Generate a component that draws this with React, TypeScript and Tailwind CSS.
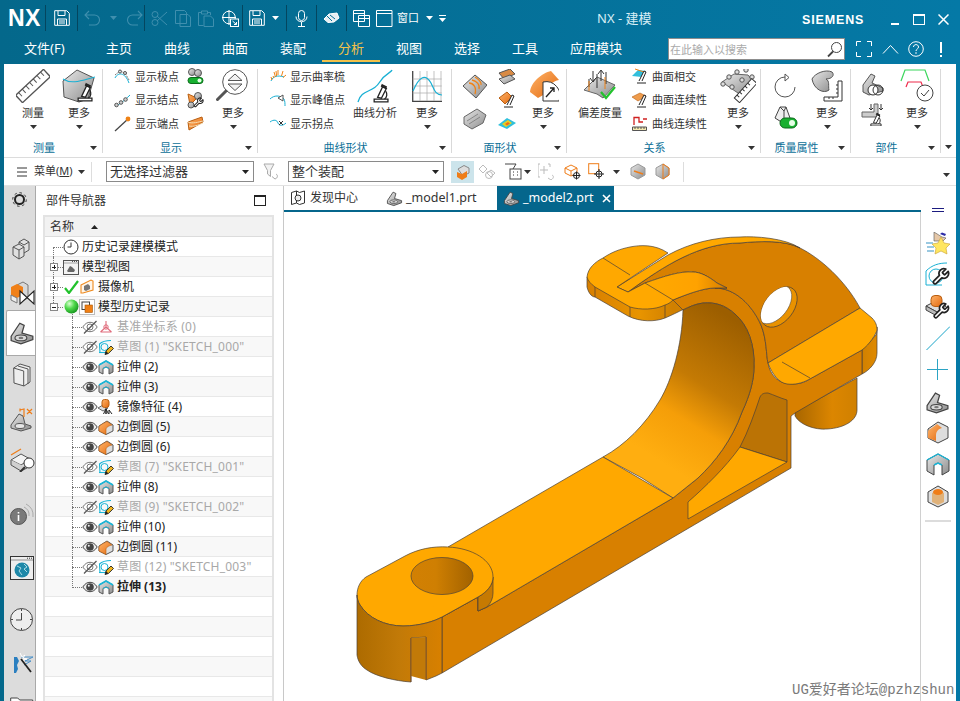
import React from 'react';

const font = "font-['Noto_Sans','Noto_Sans_CJK_SC',sans-serif]";

const Ico: React.FC<{ w?: number; h?: number; vb?: string; className?: string; children: React.ReactNode }> = ({ w = 16, h = 16, vb, className = '', children }) => (
  <svg width={w} height={h} viewBox={vb || `0 0 ${w} ${h}`} className={`block shrink-0 ${className}`} fill="none">
    {children}
  </svg>
);

const Caret: React.FC<{ c?: string; w?: number }> = ({ c = '#333', w = 7 }) => (
  <svg width={w} height={4} viewBox="0 0 7 4" className="block shrink-0"><path d="M0 0h7L3.5 4z" fill={c} /></svg>
);

const wrenchPath = 'M14.7 6.3a1 1 0 0 0 0 1.4l1.6 1.6a1 1 0 0 0 1.4 0l3.77-3.77a6 6 0 0 1-7.94 7.94l-6.91 6.91a2.12 2.12 0 0 1-3-3l6.91-6.91a6 6 0 0 1 7.94-7.94l-3.76 3.76z';

const Micro: React.FC<{ x: number; y: number; s?: number }> = ({ x, y, s = 1 }) => (
  <g transform={`translate(${x} ${y}) scale(${s})`} stroke="#222" strokeWidth={1.1} fill="#fff">
    <path d="M1 14h12v2.5H1z" />
    <path d="M4 12.5 8.5 3l3.2 1.6-4.4 8.6z" />
    <path d="M8 1.5l3.5 1.8-.7 1.3-3.4-1.8z" fill="#333" />
    <path d="M11 7a5 5 0 0 1-1 7" fill="none" />
  </g>
);

const Wrench: React.FC<{ x: number; y: number; s?: number }> = ({ x, y, s = 1 }) => (
  <g transform={`translate(${x} ${y}) scale(${s})`}><path d={wrenchPath} fill="#fff" stroke="#222" strokeWidth={2.2} strokeLinejoin="round" /></g>
);

const Pencil: React.FC<{ x: number; y: number }> = ({ x, y }) => (
  <g transform={`translate(${x} ${y})`}>
    <path d="M0 9 1 5.6 6 .5 8.500 3 3.400 8z" fill="#f1b51c" stroke="#222" strokeWidth={0.9} />
    <path d="M0 9 1 5.6 3.400 8z" fill="#222" />
  </g>
);

const Part: React.FC<{ s?: number; c?: string }> = ({ s = 24 }) => (
  <Ico w={s} h={s} vb="0 0 24 24">
    <path d="M2 15 10 3l4 2-2 7 10 3v3l-11 4-9-3z" fill="url(#gGray)" stroke="#444" strokeWidth={1.2} />
    <ellipse cx="11" cy="16.500" rx="5.500" ry="2.600" fill="#d9d9d9" stroke="#444" />
    <ellipse cx="11" cy="16.500" rx="2.200" ry="1.100" fill="#777" />
  </Ico>
);

const Eye: React.FC<{ off?: boolean }> = ({ off }) => (
  <Ico w={16} h={14}>
    <path d="M.8 7C3 3.500 5.500 2.300 8 2.300S13 3.500 15.200 7C13 10.500 10.500 11.700 8 11.700S3 10.500.8 7z" fill={off ? '#fff' : '#eee'} stroke={off ? '#777' : '#444'} />
    <circle cx="8" cy="7" r={off ? 3 : 3.800} fill={off ? 'none' : '#444'} stroke={off ? '#777' : 'none'} />
    {!off && <circle cx="6.800" cy="5.800" r="1" fill="#eee" />}
    {off && <path d="M14.500 1 2 13.500" stroke="#555" strokeWidth={1.2} />}
  </Ico>
);

const Extrude = () => (
  <Ico w={16} h={16}>
    <path d="M1 6 8 2l7 4v7l-4 2V9.500L8 8 5 9.500V15l-4-2z" fill="url(#gGray)" stroke="#555" />
    <path d="M1 6 8 2l7 4" stroke="#19b6d8" strokeWidth={1.6} />
    <path d="M5 9.500 8 8l3 1.500" stroke="#19b6d8" strokeWidth={1} />
  </Ico>
);

const Blend = () => (
  <Ico w={16} h={16}>
    <path d="M1 7 9 2l6 4v6l-7 3.500L1 12z" fill="#ddd" stroke="#555" />
    <path d="M1 12V8.500C1 6.500 4 5 9 2.500l5 3.500c-4 1-6 2.500-6 4.500v5z" fill="url(#gOrange)" stroke="#b85e10" strokeWidth={0.6} />
  </Ico>
);

const Sketch = () => (
  <Ico w={16} h={16}>
    <path d="M2 14 1.500 5C4 2.500 8 1.500 13 1.500" stroke="#19b6d8" strokeWidth={1.1} />
    <path d="M1 13.500h8" stroke="#19b6d8" strokeWidth={1.1} />
    <circle cx="6.500" cy="8" r="3.500" stroke="#19b6d8" />
    <Pencil x={7} y={6.500} />
  </Ico>
);

const Mirror = () => (
  <Ico w={16} h={16}>
    <path d="M0 9l5-3 5 3-5 3z" fill="#ddd" stroke="#666" />
    <rect x="4" y="0.500" width="7" height="8" rx="2.500" fill="url(#gOrange)" stroke="#b85e10" />
    <path d="M5.500 15 8 10v5M10.500 15 8 10M8 9v6M11 15V11M14 15l-3-4" stroke="#222" />
  </Ico>
);

const Datum = () => (
  <Ico w={16} h={14}>
    <path d="M8 1v6L2.500 12M8 7l5.500 5M2.500 12h11" stroke="#e06c7c" strokeWidth={1.1} />
    <circle cx="8" cy="7" r="2.200" stroke="#e06c7c" />
  </Ico>
);

const ClockI: React.FC<{ s?: number }> = ({ s = 16 }) => (
  <Ico w={s} h={s} vb="0 0 16 16">
    <circle cx="8" cy="8" r="7" stroke="#333" fill="#fff" />
    <path d="M8 3.500V8H4.500" stroke="#333" />
  </Ico>
);

type RowT = { t: string; kind: 'top' | 'child'; exp?: '+' | '-'; lead?: React.ReactNode; ic?: React.ReactNode; off?: boolean; b?: boolean; dim?: boolean };

const rows: RowT[] = [
  { t: '历史记录建模模式', kind: 'top', ic: <ClockI /> },
  {
    t: '模型视图', kind: 'top', exp: '+',
    ic: (
      <Ico w={16} h={16}>
        <rect x=".5" y="1.500" width="15" height="14" fill="#f3f3f3" stroke="#555" />
        <path d="M.5 4h15M9 2.500h5" stroke="#555" strokeDasharray="1 1" />
        <path d="M4 12 7 7l2 1 3 3-1 2H5z" fill="#666" />
      </Ico>
    ),
  },
  {
    t: '摄像机', kind: 'top', exp: '+',
    lead: <Ico w={15} h={14}><path d="M1 8l4 5L14 1" stroke="#22c22c" strokeWidth={2.200} /></Ico>,
    ic: (
      <Ico w={14} h={15}>
        <path d="M1 6l10-5 2 1v9L3 14H1z" fill="#fff5e8" stroke="#ee8a1e" strokeWidth={1.100} />
        <path d="M4 11V7l4-2 2 2v3l-4 2z" fill="#777" />
      </Ico>
    ),
  },
  {
    t: '模型历史记录', kind: 'top', exp: '-',
    lead: <Ico w={15} h={15}><circle cx="7.500" cy="7.500" r="7" fill="url(#gBall)" /></Ico>,
    ic: (
      <Ico w={16} h={16}>
        <rect x=".5" y=".5" width="15" height="15" fill="#fff" stroke="#bbb" />
        <rect x="3" y="3" width="7.500" height="7.500" fill="#fff" stroke="#444" />
        <rect x="6" y="6" width="7.500" height="7.500" fill="#f07f14" stroke="#a45608" strokeWidth={0.6} />
      </Ico>
    ),
  },
  { t: '基准坐标系 (0)', kind: 'child', off: true, dim: true, ic: <Datum /> },
  { t: '草图 (1) "SKETCH_000"', kind: 'child', off: true, dim: true, ic: <Sketch /> },
  { t: '拉伸 (2)', kind: 'child', ic: <Extrude /> },
  { t: '拉伸 (3)', kind: 'child', ic: <Extrude /> },
  { t: '镜像特征 (4)', kind: 'child', ic: <Mirror /> },
  { t: '边倒圆 (5)', kind: 'child', ic: <Blend /> },
  { t: '边倒圆 (6)', kind: 'child', ic: <Blend /> },
  { t: '草图 (7) "SKETCH_001"', kind: 'child', off: true, dim: true, ic: <Sketch /> },
  { t: '拉伸 (8)', kind: 'child', ic: <Extrude /> },
  { t: '草图 (9) "SKETCH_002"', kind: 'child', off: true, dim: true, ic: <Sketch /> },
  { t: '拉伸 (10)', kind: 'child', ic: <Extrude /> },
  { t: '边倒圆 (11)', kind: 'child', ic: <Blend /> },
  { t: '草图 (12) "SKETCH_003"', kind: 'child', off: true, dim: true, ic: <Sketch /> },
  { t: '拉伸 (13)', kind: 'child', b: true, ic: <Extrude /> },
];

const Defs = () => (
  <svg className="absolute w-0 h-0">
    <defs>
      <linearGradient id="gGray" x1="0" y1="0" x2="1" y2="1"><stop offset="0" stopColor="#e8e8e8" /><stop offset="1" stopColor="#8c8c8c" /></linearGradient>
      <linearGradient id="gOrange" x1="0" y1="0" x2="1" y2="1"><stop offset="0" stopColor="#ffb46a" /><stop offset="1" stopColor="#e2690f" /></linearGradient>
      <radialGradient id="gBall" cx=".35" cy=".3" r=".8"><stop offset="0" stopColor="#d8ffd0" /><stop offset=".45" stopColor="#4ed84a" /><stop offset="1" stopColor="#0d8a16" /></radialGradient>
      <linearGradient id="mEnd" x1="357" y1="0" x2="442" y2="0" gradientUnits="userSpaceOnUse"><stop offset="0" stopColor="#ad6b00" /><stop offset=".5" stopColor="#c27a08" /><stop offset="1" stopColor="#d88000" /></linearGradient>
      <linearGradient id="mHole" x1="411" y1="0" x2="473" y2="0" gradientUnits="userSpaceOnUse"><stop offset="0" stopColor="#d28003" /><stop offset=".4" stopColor="#cf7f02" /><stop offset="1" stopColor="#a26200" /></linearGradient>
      <linearGradient id="mInner" x1="650" y1="455" x2="735" y2="320" gradientUnits="userSpaceOnUse"><stop offset="0" stopColor="#ffae10" /><stop offset=".3" stopColor="#f59e08" /><stop offset=".55" stopColor="#c47a04" /><stop offset="1" stopColor="#9c5e00" /></linearGradient>
      <linearGradient id="mCyl" x1="795" y1="0" x2="857" y2="0" gradientUnits="userSpaceOnUse"><stop offset="0" stopColor="#a86600" /><stop offset=".6" stopColor="#dc8600" /><stop offset="1" stopColor="#d08000" /></linearGradient>
      <linearGradient id="mTab" x1="590" y1="0" x2="673" y2="0" gradientUnits="userSpaceOnUse"><stop offset="0" stopColor="#d88000" /><stop offset=".6" stopColor="#e89400" /><stop offset="1" stopColor="#d08000" /></linearGradient>
      <linearGradient id="mTabTop" x1="655" y1="0" x2="725" y2="0" gradientUnits="userSpaceOnUse"><stop offset="0" stopColor="#ffa800" /><stop offset=".6" stopColor="#ffa200" /><stop offset="1" stopColor="#d88000" /></linearGradient>
      <linearGradient id="mPad" x1="862" y1="0" x2="877" y2="0" gradientUnits="userSpaceOnUse"><stop offset="0" stopColor="#d08000" /><stop offset="1" stopColor="#e08a00" /></linearGradient>
    </defs>
  </svg>
);

const Sep = () => <div className="w-px h-[26px] bg-[#04465f] shrink-0" />;

const TitleBar = () => {
  const w = '#fff';
  const d = '#3f8fae';
  return (
    <div className="h-[36px] flex items-center shrink-0 text-white relative">
      <div className="w-[45px] pl-[8px] text-[23px] font-bold leading-none font-['Liberation_Sans',sans-serif] tracking-[0.5px]">NX</div>
      <Sep />
      <div className="w-[31px] flex justify-center">
        <Ico w={16} h={16}><path d="M.7.7h12l2.600 2.600v12H.7z M4 1v4.500h7V1M3.500 15V9h9v6M5 11h6M5 13h6" stroke={w} /></Ico>
      </div>
      <Sep />
      <div className="w-[66px] pl-[6px] flex items-center">
        <Ico w={17} h={17}><path d="M5 1 1 5l4 4M1 5h9.500a5 5 0 0 1 0 10H5" stroke={d} strokeWidth={1.100} /></Ico>
        <div className="ml-[9px] mr-[9px]"><Caret c={d} /></div>
        <Ico w={17} h={17}><path d="M12 1l4 4-4 4M16 5H6.500a5 5 0 0 0 0 10H12" stroke={d} strokeWidth={1.100} /></Ico>
      </div>
      <Sep />
      <div className="w-[97px] pl-[6px] flex items-center gap-[7px]">
        <Ico w={17} h={17}><circle cx="4" cy="12.500" r="3" stroke={d} /><circle cx="4" cy="4.500" r="3" stroke={d} /><path d="M6 11 16 2M6 6l10 9" stroke={d} /></Ico>
        <Ico w={16} h={17}><path d="M.5.5h9l2 2v11H.5zM5 4.500h8l2.500 2.500v9.500H5z" stroke={d} /></Ico>
        <Ico w={16} h={17}><path d="M3 2.500H.5v13h5M10 2.500h2.500V5M3.500 1h6v3h-6zM6 6h6.500l3 3v7.500H6z" stroke={d} /></Ico>
        <Ico w={17} h={17} className="ml-[1px]"><circle cx="7" cy="7.500" r="6.300" stroke={w} /><path d="M7 0v15M0 7.500h14" stroke={w} /><rect x="8.500" y="9" width="8" height="7.500" fill="#056f96" stroke={w} /><path d="M10.500 11l4 3.500M14.500 12v2.500H12" stroke={w} /></Ico>
      </div>
      <Sep />
      <div className="w-[43px] pl-[6px] flex items-center gap-[7px]">
        <Ico w={16} h={16}><path d="M.7.7h12l2.600 2.600v12H.7z M4 1v4.500h7V1M3.500 15V9h9v6M5 11h6M5 13h6" stroke={w} /></Ico>
        <Caret c={w} />
      </div>
      <Sep />
      <div className="w-[29px] flex justify-center">
        <Ico w={13} h={17}><rect x="3.500" y=".5" width="6" height="10" rx="3" stroke={w} /><path d="M1 6.500c0 7 11 7 11 0M6.500 12v4M3 16.500h7" stroke={w} /></Ico>
      </div>
      <Sep />
      <div className="w-[29px] flex justify-center">
        <Ico w={17} h={12}><path d="M1 7l5-5 8-1 2 5-5 4-6 .5z" fill="#e8eef2" stroke={w} /><path d="M4 4l5 5M7 3l5 4" stroke="#056f96" /></Ico>
      </div>
      <Sep />
      <div className="pl-[6px] flex items-center">
        <Ico w={17} h={17}><path d="M.5.5h11v11H.5zM.5 3.500h11M5.500 5.500h11v11h-11zM5.500 8.500h11" stroke={w} /></Ico>
        <Ico w={17} h={17} className="ml-[6px]"><path d="M.5.5h15.500v16H.5zM.5 3.500h15.500" stroke={w} /></Ico>
        <span className="ml-[4px] text-[11px]">窗口</span>
        <div className="ml-[7px]"><Caret c={w} /></div>
        <div className="ml-[6px] flex flex-col gap-[2px]"><div className="w-[7px] h-px bg-white" /><Caret c={w} /></div>
      </div>
      <div className="absolute left-[597px] top-[9px] text-[13px] leading-[18px] text-[#d8eef6]">NX - 建模</div>
      <div className="absolute left-[802px] top-[11px] text-[12.5px] leading-[18px] font-bold font-['Liberation_Sans',sans-serif] tracking-[0.85px] text-white">SIEMENS</div>
      <div className="absolute left-[891px] top-[14px] flex items-start">
        <div className="w-[8px] h-[2px] bg-white mt-[9px]" />
        <div className="w-[12px] h-[11px] border border-white border-t-2 ml-[14px]" />
        <Ico w={11} h={11} className="ml-[13px]"><path d="M.5.5l10 10M10.500.5l-10 10" stroke={w} strokeWidth={1.500} /></Ico>
      </div>
    </div>
  );
};

const MenuTabs = () => {
  const tabs = ['主页', '曲线', '曲面', '装配', '分析', '视图', '选择', '工具'];
  return (
    <div className="h-[28px] flex items-start shrink-0 text-white text-[13px] leading-[24px] relative">
      <div className="w-[90px] pl-[24px]">文件(F)</div>
      {tabs.map(t => (
        <div key={t} className={`w-[58px] h-[26px] text-center ${t === '分析' ? 'text-[#f2c14a] border-b-2 border-[#f2c14a]' : ''}`}>{t}</div>
      ))}
      <div className="ml-[16px]">应用模块</div>
      <div className="absolute left-[668px] top-[2px] w-[177px] h-[22px] bg-white border border-[#8d8d8d] flex items-center justify-between pl-[1px] pr-[1px]">
        <span className="text-[11px] leading-none text-[#aaa]">在此输入以搜索</span>
        <Ico w={17} h={17}><circle cx="10.500" cy="6.500" r="5" stroke="#444" fill="#fff" /><path d="M7 10.500 2 15.500" stroke="#444" strokeWidth={1.800} /></Ico>
      </div>
      <div className="absolute left-[856px] top-[5px] flex items-center">
        <Ico w={16} h={16}><path d="M.5 5V.5H5M11 .5h4.500V5M15.500 11v4.500H11M5 15.500H.5V11" stroke="#fff" /></Ico>
        <Ico w={17} h={10} className="ml-[10px]"><path d="M1 9.500l7.500-8 7.500 8" stroke="#fff" /></Ico>
        <Ico w={16} h={16} className="ml-[9px]"><circle cx="8" cy="8" r="7.300" stroke="#fff" /><path d="M5.500 6c0-3.200 5-3.200 5 0 0 2-2.500 2-2.500 4" stroke="#fff" /><circle cx="8" cy="12" r=".8" fill="#fff" /></Ico>
        <div className="ml-[16px] flex flex-col items-center gap-[2px]"><div className="w-[2px] h-[11px] bg-white" /><div className="w-[2px] h-[2px] bg-white" /></div>
      </div>
    </div>
  );
};

const Large: React.FC<{ label: string; w?: number; children: React.ReactNode; noCaret?: boolean }> = ({ label, w = 46, children, noCaret }) => (
  <div className="flex flex-col items-center shrink-0" style={{ width: w }}>
    <div className="h-[34px] flex items-center justify-center">{children}</div>
    <div className="mt-[2px] h-[15px] text-[11px] leading-[15px] text-[#333] whitespace-nowrap">{label}</div>
    {!noCaret && <div className="mt-[5px]"><Caret c="#333" /></div>}
  </div>
);

const Small: React.FC<{ label?: string; children: React.ReactNode }> = ({ label, children }) => (
  <div className="h-[23.5px] flex items-center gap-[4px] text-[11px] text-[#333] whitespace-nowrap">
    {children}
    {label && <span>{label}</span>}
  </div>
);

const Group: React.FC<{ w: number; label?: string; className?: string; children?: React.ReactNode }> = ({ w, label, className = '', children }) => (
  <div className="shrink-0 h-[84px] border-r border-[#d9d9d9] flex flex-col" style={{ width: w }}>
    <div className={`h-[72px] flex items-start ${className}`}>{children}</div>
    <div className="h-[12px] flex items-center">
      <div className="flex-1 text-center text-[11px] leading-[14px] text-[#0b6f97] pt-[2px]">{label}</div>
      <div className="w-[18px] flex justify-center pt-[2px]"><Caret c="#333" /></div>
    </div>
  </div>
);

const Ribbon = () => (
  <div className="h-[94px] shrink-0 border-b border-[#dcdcdc] pt-[5px] flex relative">
    <Group w={99} label="测量" className="pl-[6px]">
      <Large label="测量">
        <Ico w={34} h={34}><g transform="rotate(-43 17 17)"><rect x="-2" y="12" width="38" height="10" fill="#fff" stroke="#555" strokeWidth={1.400} />{[2, 7, 12, 17, 22, 27, 32].map(x => <path key={x} d={`M${x} 12v5`} stroke="#555" />)}</g></Ico>
      </Large>
      <Large label="更多">
        <Ico w={34} h={34}>
          <path d="M1 12 15 1l17 8-6 21-9 3-15-5z" fill="url(#gGray)" stroke="#555" />
          <path d="M1 10c9 6 20 1 32-2" stroke="#19b0d4" strokeWidth={1.100} />
          <Micro x={15} y={13} s={1.150} />
        </Ico>
      </Large>
    </Group>
    <Group w={155} label="显示" className="pl-[11px]">
      <div className="w-[73px] -mt-[4px]">
        <Small label="显示极点"><Ico w={17} h={15}><path d="M1 9c3-6 10-6 14 5" stroke="#19b0d4" /><path d="M1 6 6 2l5 2 4 7" stroke="#777" strokeDasharray="2 1" /><circle cx="6" cy="2.500" r="1.500" fill="#ddd" stroke="#555" /><circle cx="11" cy="4" r="1.500" fill="#ddd" stroke="#555" /></Ico></Small>
        <Small label="显示结点"><Ico w={17} h={15}><path d="M1 13c4-1 9-5 15-11" stroke="#19b0d4" /><circle cx="2.500" cy="12" r="1.800" fill="#ccc" stroke="#555" /><circle cx="7" cy="9.500" r="1.800" fill="#ccc" stroke="#555" /><circle cx="11.500" cy="6.500" r="1.800" fill="#ccc" stroke="#555" /></Ico></Small>
        <Small label="显示端点"><Ico w={17} h={16}><path d="M1 15 14 3" stroke="#444" strokeWidth={1.200} /><circle cx="14" cy="3" r="2.400" fill="#ef8216" /></Ico></Small>
      </div>
      <div className="-mt-[4px] flex flex-col items-start">
        <Small><Ico w={17} h={17}><circle cx="5" cy="4" r="3.500" fill="url(#gGray)" stroke="#555" /><circle cx="11" cy="5" r="3.500" fill="url(#gGray)" stroke="#555" /><rect x="1" y="9.500" width="15" height="6" rx="3" fill="#18b030" stroke="#0b6a1a" /><circle cx="12.500" cy="12.500" r="2" fill="#e6ffe6" /></Ico></Small>
        <Small><Ico w={17} h={17}><path d="M1 2l9 4-7 7z" fill="url(#gOrange)" stroke="#b85e10" /><circle cx="11" cy="4" r="3.500" fill="url(#gGray)" stroke="#555" /><circle cx="4" cy="13" r="3" fill="url(#gGray)" stroke="#555" /><Wrench x={6} y={5} s={0.46} /></Ico></Small>
        <Small><Ico w={17} h={15}><path d="M1 6l14-5 1 5-14 8z" fill="url(#gOrange)" stroke="#b85e10" /><path d="M1 6c5 2 10 0 15-1M2 10c5 1 9-1 14-3" stroke="#f5dcb0" /></Ico></Small>
      </div>
      <div className="ml-[6px]">
        <Large label="更多" w={46}>
          <Ico w={34} h={34}>
            <circle cx="19" cy="13" r="12.300" fill="#fff" stroke="#555" />
            <path d="M12 11.500 19 5l7 6.500zM12 15l7 6.500 7-6.500z" stroke="#555" fill="#f2f2f2" />
            <path d="M10 22 1.500 30.500" stroke="#555" strokeWidth={3} strokeLinecap="round" />
          </Ico>
        </Large>
      </div>
    </Group>
    <Group w={194} label="曲线形状" className="pl-[12px]">
      <div className="w-[79px] -mt-[4px]">
        <Small label="显示曲率梳"><Ico w={16} h={15}><path d="M1 12C3 7 8 6 14 8" stroke="#19b0d4" /><path d="M1 8l1 3M4 3l1.500 5M8 1l0 5M13 2l-1.500 5M16 6l-3 2.500M3 7l1 2M6 2l.6 5" stroke="#ef8216" /></Ico></Small>
        <Small label="显示峰值点"><Ico w={16} h={14}><path d="M0 6c4-4 10-4 14 0 1 2 1 5 1 7" stroke="#19b0d4" /><path d="M8 5l5-3v6z" fill="#fff" stroke="#555" /></Ico></Small>
        <Small label="显示拐点"><Ico w={16} h={9}><path d="M0 3c4-3 7-2 8 1s5 3 8 0" stroke="#19b0d4" /><path d="M9 2l4 4M13 2 9 6" stroke="#333" /></Ico></Small>
      </div>
      <div className="ml-[4px]">
        <Large label="曲线分析" w={52} noCaret>
          <Ico w={36} h={34}>
            <path d="M1 33C4 20 16 24 22 14S34 4 35 1" stroke="#19b0d4" strokeWidth={1.300} />
            <Micro x={16} y={14} s={1.150} />
          </Ico>
        </Large>
      </div>
      <div className="ml-[0px]">
        <Large label="更多" w={52}>
          <Ico w={30} h={31}>
            <path d="M.7 0v30.300H30" stroke="#444" strokeWidth={1.300} />
            <path d="M.7 8h29M.7 15h29M.7 22h29M8 0v30M15 0v30M22 0v30M29 0v30" stroke="#aaa" strokeWidth={0.7} />
            <path d="M1 20c6-14 12-18 18-8 3 6 4 12 11 12" stroke="#19b0d4" strokeWidth={1.200} />
          </Ico>
        </Large>
      </div>
    </Group>
    <Group w={115} label="面形状" className="pl-[11px]">
      <div className="flex flex-col gap-[9px] w-[32px] pt-[5px]">
        <Ico w={24} h={25}><path d="M0 12 12 1l12 10-11 13z" fill="url(#gGray)" stroke="#555" /><path d="M6 9c4 0 8 4 6 11M9 6c4 1 8 4 7 9M12 3c3 2 7 5 6 8" stroke="#ef8216" strokeWidth={1.300} /></Ico>
        <Ico w={24} h={22}><path d="M1 9 14 1l9 6-3 8-11 6-8-5z" fill="url(#gGray)" stroke="#666" /><path d="M4 13l11-7M6 16l11-7" stroke="#777" strokeWidth={0.8} /></Ico>
      </div>
      <div className="-mt-[4px] ml-[3px] w-[22px]">
        <Small><Ico w={18} h={16}><path d="M1 4l11-4 5 5L6 10z" fill="#d88a44" stroke="#555" /><path d="M1 10l11-4 5 4-11 5z" fill="url(#gGray)" stroke="#555" /></Ico></Small>
        <Small><Ico w={18} h={18}><path d="M1 7l8-6 5 5-7 7z" fill="url(#gOrange)" stroke="#b85e10" /><path d="M6 16h9M9 14 14 4l2 1-4 9" stroke="#222" fill="#fff" /></Ico></Small>
        <Small><Ico w={18} h={13}><path d="M0 8l9-7 9 5-9 6z" fill="#2fc0dc" /><path d="M4 7l6-4 4 3-6 4z" fill="#e8d020" /><path d="M7 7l3-2 2 1.500-3 2z" fill="#ef6a1c" /></Ico></Small>
      </div>
      <div className="ml-[3px]">
        <Large label="更多" w={40}>
          <Ico w={32} h={32}>
            <path d="M3 22C4 12 15 3 24 1l8 9c-6 1-12 6-14 14l-7 4z" fill="url(#gOrange)" />
            <path d="M16 12a14 14 0 0 1 16 19H16z" fill="#fff" stroke="#333" />
            <path d="M19 27 27 18M23 18h4v4" stroke="#222" strokeWidth={1.300} />
          </Ico>
        </Large>
      </div>
    </Group>
    <Group w={194} label="关系" className="pl-[9px]">
      <Large label="偏差度量" w={48} noCaret>
        <Ico w={34} h={34}>
          <path d="M1 21 14 8l18 8-12 13-6-4z" fill="url(#gGray)" stroke="#666" />
          <path d="M10 2v11M7 9l3 4 3-4M18 2v10M15 5l3-4 3 4M6 10v8M14 5v14M23 3v12" stroke="#333" />
          <path d="M6 12v10M22 8v12" stroke="#ef8216" />
          <path d="M18 23l5 6 9-11" stroke="#22c22c" strokeWidth={2.200} />
        </Ico>
      </Large>
      <div className="ml-[8px] w-[85px] -mt-[4px]">
        <Small label="曲面相交"><Ico w={16} h={17}><path d="M0 8 6 2l8 1-4 6z" fill="#33bfdc" /><path d="M3 1l9 3" stroke="#ef8216" /><path d="M5 15h9M7 13 12 3l2 1-4 9" stroke="#222" fill="#fff" /></Ico></Small>
        <Small label="曲面连续性"><Ico w={16} h={17}><path d="M0 5 8 1l6 3-8 5z" fill="#ef9c4c" stroke="#b85e10" strokeWidth={0.6} /><path d="M5 15h9M7 13 12 3l2 1-4 9" stroke="#222" fill="#fff" /></Ico></Small>
        <Small label="曲线连续性"><Ico w={16} h={15}><path d="M2 9V1.500h5V6h4M11 3h4" stroke="#d02020" strokeWidth={1.300} /><path d="M.5 11h14v3.500H.5z" fill="#f4e9b0" stroke="#555" /><path d="M3 11v2M6 11v2M9 11v2M12 11v2" stroke="#555" /></Ico></Small>
      </div>
      <div className="ml-[1px]">
        <Large label="更多" w={40}>
          <Ico w={36} h={34}>
            <path d="M2 13 14 5l14 1 5 6-12 14-6-4z" fill="url(#gGray)" stroke="#666" />
            {[[3, 15], [9, 8], [17, 3], [26, 1], [32, 8], [12, 18], [22, 11]].map(([x, y]) => <circle key={`${x}${y}`} cx={x} cy={y} r="2.200" fill="#ddd" stroke="#555" />)}
            <g transform="rotate(-48 26 22)"><rect x="13" y="18" width="26" height="7" fill="#fff" stroke="#333" /><path d="M17 18v3M21 18v3M25 18v3M29 18v3M33 18v3" stroke="#333" /></g>
          </Ico>
        </Large>
      </div>
    </Group>
    <Group w={90} label="质量属性" className="pl-[9px]">
      <div className="w-[29px] flex flex-col items-center gap-[4px] pt-[2px]">
        <Ico w={24} h={28} vb="0 0 24 28"><path d="M12 6a10 10 0 1 0 10 10" stroke="#555" /><path d="M12 3v7l4-3.500z" stroke="#555" fill="#fff" /></Ico>
        <Ico w={26} h={26}><path d="M3 15 8 4h6l4 11-7 5z" fill="#eee" stroke="#444" /><path d="M8 4l4 4 2-4M12 8v12" stroke="#444" /><rect x="8" y="15" width="17" height="10" rx="5" fill="#18b030" stroke="#0b6a1a" /><circle cx="20" cy="20" r="3" fill="#e6ffe6" /></Ico>
      </div>
      <div className="ml-[5px]">
        <Large label="更多" w={46}>
          <Ico w={32} h={32}>
            <path d="M1 9c3-6 14-10 20-7 3 3 0 7-6 7 4 2 2 7 3 11-5 4-15 0-17-11z" fill="url(#gGray)" stroke="#555" />
            <path d="M31 11v20H13v-4h14V11z" fill="#fff" stroke="#333" />
            <path d="M27 15h-2M27 19h-2M27 23h-2M18 27v2M22 27v2" stroke="#333" />
          </Ico>
        </Large>
      </div>
    </Group>
    <Group w={90} label="部件" className="pl-[9px]">
      <div className="w-[26px] flex flex-col items-center gap-[5px] pt-[4px]">
        <Ico w={22} h={24}><path d="M1 12 9 1l4 2-3 7 11 5v3l-14 4-6-3z" fill="url(#gGray)" stroke="#555" /><circle cx="11" cy="17" r="5" fill="#fff" stroke="#333" /><circle cx="16" cy="17" r="5" stroke="#333" /></Ico>
        <Ico w={24} h={24}><path d="M1 10h12V2h4v13H1z" fill="#ccc" stroke="#666" /><path d="M10 2v5M8 6l2 2 2-2M20 2v5M22 6l-2 2-2-2" stroke="#333" /><Micro x={9} y={10} s={0.85} /></Ico>
      </div>
      <div className="ml-[8px]">
        <Large label="更多" w={46}>
          <Ico w={34} h={34}>
            <path d="M1 12 5 1h20l4 11" stroke="#3bd65c" strokeWidth={1.200} />
            <path d="M6 18l2-5h13l2 5" stroke="#ee2b4b" strokeWidth={1.200} />
            <circle cx="25" cy="24" r="8" fill="#fff" stroke="#444" />
            <path d="M21 24l3 3 5-6" stroke="#444" />
          </Ico>
        </Large>
      </div>
    </Group>
    <div className="h-[84px] w-[15px] flex items-end justify-center pb-[4px]"><Caret c="#333" /></div>
  </div>
);

const Combo: React.FC<{ w: number; t: string }> = ({ w, t }) => (
  <div className="h-[21px] border border-[#8a8a8a] flex items-center justify-between pl-[3px] pr-[2px] text-[13px] text-[#333] shrink-0 bg-white" style={{ width: w }}>
    <span>{t}</span>
    <div className="mr-[2px]"><Caret c="#222" /></div>
  </div>
);

const Toolbar = () => (
  <div className="h-[27px] shrink-0 flex items-center relative">
    <div className="w-[102px] pl-[13px] flex items-center text-[11px] text-[#333]">
      <Ico w={10} h={10}><path d="M0 1h10M0 5h10M0 9h10" stroke="#333" /></Ico>
      <span className="ml-[7px]">菜单(<span className="underline">M</span>)</span>
      <div className="ml-[5px]"><Caret c="#333" /></div>
      <div className="w-px h-[20px] bg-[#ddd] ml-[6px]" />
    </div>
    <Combo w={148} t="无选择过滤器" />
    <div className="w-[34px] flex justify-center">
      <Ico w={17} h={17}><path d="M1 1h10L7.500 7.500v6L4.500 11V7.500z" fill="#f2f2f2" stroke="#aaa" /><path d="M9 13.500l3 2.500c3-1 3-4 1-5" stroke="#aaa" /></Ico>
    </div>
    <Combo w={156} t="整个装配" />
    <div className="ml-[7px] w-[23px] h-[22px] bg-[#cce4eb] flex items-center justify-center">
      <Ico w={16} h={16}><path d="M3 5 9 1.500 14 4v5L8 12z" fill="#ddd" stroke="#888" /><path d="M2 8l5 2 5-3v6l-5 3-5-3z" fill="#ef7d18" /></Ico>
    </div>
    <div className="flex items-center">
      <Ico w={18} h={17} className="ml-[4px]"><path d="M1 6l4-4 4 4-4 4zM9 10l4-3 4 3-4 4z" stroke="#bbb" /><circle cx="11" cy="12" r="3.500" stroke="#bbb" /></Ico>
      <Ico w={18} h={17} className="ml-[8px]"><path d="M1 1h11L9 6v10" stroke="#444" /><rect x="6" y="6" width="11" height="10" fill="#fff" stroke="#444" /><path d="M9 9h1M13 9h1M9 12h1M13 12h1" stroke="#333" /></Ico>
      <div className="ml-[2px]"><Caret c="#333" /></div>
      <Ico w={16} h={17} className="ml-[7px]"><path d="M2 1H0v13h2M10 1h2v3" stroke="#bbb" /><path d="M6 3v8M2 7h8M10 15l3 2c3-2 3-4 1-5" stroke="#bbb" /></Ico>
      <Ico w={17} h={17} className="ml-[10px]"><path d="M1 5l6-3 6 3v5l-6 3-6-3zM1 5l6 3 6-3M7 8v5" stroke="#ef7d18" /><circle cx="12.500" cy="12.500" r="3" fill="#fff" stroke="#222" /><path d="M12.500 8.500v8M8.500 12.500h8" stroke="#222" /></Ico>
      <Ico w={17} h={17} className="ml-[7px]"><rect x=".7" y=".7" width="10" height="10" stroke="#ef7d18" fill="#fff" /><circle cx="11" cy="11" r="3" stroke="#222" fill="#fff" /><path d="M11 6v10M6 11h10" stroke="#222" /></Ico>
      <div className="ml-[8px]"><Caret c="#333" /></div>
      <Ico w={17} h={17} className="ml-[10px]"><path d="M1 5l7-4 7 4v7l-7 4-7-4z" fill="url(#gGray)" stroke="#999" /><path d="M4 8l9 3" stroke="#ef7d18" strokeWidth={1.400} /></Ico>
      <Ico w={16} h={17} className="ml-[8px]"><path d="M1 5l7-4 6 4v7l-6 4-7-4z" fill="url(#gGray)" stroke="#999" /><path d="M8 1v15M8 1l6 4v7l-6 4" stroke="#ef7d18" /></Ico>
      <div className="w-px h-[20px] bg-[#ddd] ml-[12px]" />
    </div>
    <div className="absolute left-[939px] top-[15px]"><Caret c="#333" /></div>
  </div>
);

const railCls = 'flex justify-center';

const Rail = () => (
  <div className="w-[32px] shrink-0 bg-[#dcdcdc] border-r border-[#a9a9a9] h-full overflow-hidden relative">
    <div className={`${railCls} pt-[5px]`}>
      <Ico w={17} h={17} vb="0 0 17 17"><circle cx="8.500" cy="8.500" r="4.500" stroke="#222" strokeWidth={2} /><circle cx="8.500" cy="8.500" r="6.800" stroke="#333" strokeWidth={1} strokeDasharray="2.500 2.800" /></Ico>
    </div>
    <div className="pl-[8px] mt-[30px]">
      <Ico w={18} h={22}>
        <path d="M1 9l6-3V4l5-3 5 3v8l-5 3v3l-5 3-6-4z" fill="#e0e0e0" stroke="#555" />
        <path d="M1 9l6 3 5-3M7 12v9M7 6l5 3v6M7 4l5 3 5-3" stroke="#555" />
      </Ico>
    </div>
    <div className="pl-[6px] mt-[20px]">
      <Ico w={25} h={26}>
        <path d="M7 5l6-3 5 3v13l-6 3z" fill="#d8d8d8" stroke="#777" />
        <path d="M1 7l6-3 6 3v8l-6 3-6-3z" fill="#f08018" />
        <path d="M1 15l6 3v5l-6-3z" fill="#eee" stroke="#777" />
        <path d="M10 11l14 13V11L10 24z" fill="#fff" stroke="#222" strokeWidth={1.100} />
      </Ico>
    </div>
    <div className="h-[46px] ml-[2px] mt-[4px] bg-white border border-r-0 border-[#a9a9a9] rounded-tl-[2px] flex items-center justify-center relative z-10 w-[30px]"><Part s={26} /></div>
    <div className="pl-[9px] mt-[7px]">
      <Ico w={18} h={24}><path d="M.7 5 7 1l10 3v15l-6 4-10-3z" fill="#eee" stroke="#555" /><path d="M.7 5l10 3v15M5 3l10 3v15" stroke="#555" /></Ico>
    </div>
    <div className="pl-[6px] mt-[21px]">
      <Ico w={25} h={24}>
        <path d="M1 17 9 6l4 2 2 8 6 2v2l-10 3-10-3z" fill="url(#gGray)" stroke="#555" />
        <ellipse cx="10" cy="18" rx="5" ry="2.500" fill="#e6e6e6" stroke="#555" />
        <path d="M10 2l4-1v8M10 .5v3M17 1l5 5M22 1l-5 5" stroke="#ef7d18" strokeWidth={1.200} />
      </Ico>
    </div>
    <div className="pl-[6px] mt-[16px]">
      <Ico w={26} h={24}>
        <path d="M1 12 11 6l9 5-9 6z" fill="#f2f2f2" stroke="#555" />
        <path d="M1 12v5l10 6 6-3" stroke="#555" fill="#d0d0d0" />
        <path d="M1 7l10-6" stroke="#ef7d18" strokeWidth={1.200} />
        <circle cx="19" cy="15" r="5" fill="#fff" stroke="#333" />
        <path d="M15 19l-5 5" stroke="#333" strokeWidth={2} />
      </Ico>
    </div>
    <div className="pl-[6px] mt-[31px]">
      <Ico w={24} h={23}>
        <circle cx="8.500" cy="13.500" r="8" fill="#7a7a7a" stroke="#555" />
        <path d="M8.500 9v1.500M8.500 12v6" stroke="#fff" strokeWidth={1.600} />
        <path d="M14 4a9 9 0 0 1 5 9M16 1a13 13 0 0 1 7 13" stroke="#aaa" />
      </Ico>
    </div>
    <div className="pl-[6px] mt-[30px]">
      <Ico w={24} h={24}>
        <rect x=".5" y=".5" width="23" height="23" fill="#eee" stroke="#333" />
        <path d="M.5 4h23M17 2.200h5" stroke="#333" strokeDasharray="1 1" />
        <circle cx="12" cy="14" r="7.500" fill="#1e88a8" />
        <path d="M7 10l4 2-2 3 3 4M14 8l3 3-3 2 3 3" stroke="#a8dbe6" />
      </Ico>
    </div>
    <div className="pl-[6px] mt-[28px]">
      <Ico w={23} h={23}><circle cx="11.500" cy="11.500" r="11" stroke="#444" fill="#eee" /><path d="M11.500 5v7H6" stroke="#444" /><path d="M11.500 1v2M11.500 20v2M1 11.500h2M20 11.500h2" stroke="#444" /></Ico>
    </div>
    <div className="pl-[7px] mt-[22px]">
      <Ico w={24} h={24}>
        <path d="M3 4h3l2 4-2 4 1 4-2 4H3z" fill="#2b7fc0" />
        <path d="M10 4h12l-8 4h6l-7 4" stroke="#4a90c8" />
        <path d="M10 6l10 13" stroke="#222" strokeWidth={1.800} />
        <path d="M9 0l2 4 3-2-2 3 4 1-4 1" stroke="#fff" />
      </Ico>
    </div>
    <div className="pl-[6px] mt-[16px]">
      <Ico w={24} h={22}><path d="M.7 5h7l2 2h13v15H.7z" fill="#fff" stroke="#444" /><path d="M5 10l2-2 2 2M15 10l2-2 2 2" stroke="#444" /></Ico>
    </div>
  </div>
);

const Dotted: React.FC<{ className: string }> = ({ className }) => <div className={`absolute border-dotted border-[#777] ${className}`} />;

const Tree = () => {
  const empties = Array.from({ length: 6 });
  return (
    <div className="w-[248px] shrink-0 border-r border-[#c8c8c8] h-full flex flex-col pl-[7px] overflow-hidden">
      <div className="h-[29px] shrink-0 flex items-center justify-between pl-[3px] pr-[17px] text-[12px] text-[#333]">
        <span>部件导航器</span>
        <div className="w-[12px] h-[11px] border border-[#222] border-t-2" />
      </div>
      <div className="w-[231px] border-x-2 border-t-2 border-[#e3e3e3] flex-1 min-h-0 overflow-hidden">
        <div className="h-[20px] bg-[#f2f2f2] border-b border-[#dcdcdc] flex items-center pl-[5px] text-[12px] text-[#333]">
          <span>名称</span>
          <div className="ml-[16px] rotate-180"><Caret c="#222" w={9} /></div>
        </div>
        {rows.map((r, i) => (
          <div key={r.t} className={`relative h-[20px] flex items-center border-b border-[#e8e8e8] text-[12px] whitespace-nowrap ${i % 2 ? 'bg-[#f8f8f8]' : 'bg-white'} ${r.dim ? 'text-[#a8a8a8] tracking-[0.2px]' : 'text-[#222]'} ${r.b ? 'font-bold' : ''}`}>
            {r.kind === 'top' ? (
              <>
                {i < 3 && <Dotted className={`left-[8px] border-l ${i === 0 ? 'top-[10px] bottom-[-1px]' : 'top-0 bottom-[-1px]'}`} />}
                {i === 3 && <Dotted className="left-[8px] border-l top-0 h-[6px]" />}
                {i === 3 && <Dotted className="left-[27px] border-l top-[17px] bottom-[-1px]" />}
                <Dotted className="left-[8px] w-[10px] border-t top-[10px]" />
                {r.exp && (
                  <div className="absolute left-[5px] top-[6px] w-[8px] h-[8px] border border-[#888] bg-white flex items-center justify-center">
                    <div className="w-[4px] h-px bg-[#222]" />
                    {r.exp === '+' && <div className="absolute w-px h-[4px] bg-[#222]" />}
                  </div>
                )}
                <div className={`flex items-center ${r.lead ? 'pl-[19px]' : 'pl-[18px]'}`}>
                  {r.lead}
                  <div className="w-[16px] flex justify-center">{r.ic}</div>
                </div>
                <span className="ml-[3px]">{r.t}</span>
              </>
            ) : (
              <>
                <Dotted className={`left-[27px] border-l top-0 ${i === rows.length - 1 ? 'h-[11px]' : 'bottom-[-1px]'}`} />
                <Dotted className="left-[27px] w-[10px] border-t top-[10px]" />
                <div className="pl-[37px] flex items-center">
                  <Eye off={r.off} />
                  {r.ic}
                </div>
                <span className="ml-[3px]">{r.t}</span>
              </>
            )}
          </div>
        ))}
        {empties.map((_, i) => (
          <div key={i} className={`h-[20px] border-b border-[#e8e8e8] ${i % 2 ? 'bg-[#f8f8f8]' : 'bg-white'}`} />
        ))}
      </div>
    </div>
  );
};

const Tabs = () => (
  <div className="h-[26px] shrink-0 flex items-start border-b-2 border-[#05668c] pl-[6px] text-[12px] text-[#333]">
    <div className="h-[24px] w-[70px] flex items-center gap-[4px] shrink-0">
      <Ico w={16} h={16}><path d="M1.500 2.500l5-1.500v12l-5 1.500zM6.500 1l3 1.500 5-1.500v12l-5 1.500-3-1.500" stroke="#333" /><circle cx="8" cy="8" r="3" fill="#eee" stroke="#333" /></Ico>
      <span>发现中心</span>
    </div>
    <div className="ml-[26px] h-[24px] w-[90px] flex items-center gap-[3px] shrink-0">
      <Part s={17} />
      <span className="text-[12.5px]">_model1.prt</span>
    </div>
    <div className="ml-[21px] h-[24px] w-[117px] pl-[6px] bg-[#05668c] flex items-center gap-[3px] text-white shrink-0">
      <Part s={17} />
      <span className="text-[12.5px]">_model2.prt</span>
      <Ico w={9} h={9} className="ml-[5px]"><path d="M1 1l7 7M8 1 1 8" stroke="#fff" strokeWidth={1.600} /></Ico>
    </div>
  </div>
);

const L = '#4a4038';

const Model = () => (
  <svg viewBox="284 212 636 489" className="absolute left-0 top-0 w-[636px] h-[489px]" fill="none" strokeLinejoin="round">
    {/* cylinder behind the pad */}
    <path d="M795 416C800 425 815 430 827 429C845 428 857 420 857 410V378L795 412Z" fill="url(#mCyl)" stroke={L} strokeWidth={0.7} />
    {/* hook tab side */}
    <path d="M587 277V287C589 295 593 297 595 297L628 316C640 322 655 322 665 318C672 315 678 312 684 309L680 296L600 270Z" fill="url(#mTab)" stroke={L} strokeWidth={0.7} />
    <path d="M595 285V297M630 306V317M665 305V318" stroke={L} strokeWidth={0.7} />
    {/* right pad end */}
    <path d="M862 350 876 335C877 333 877 331 877 327V353C877 362 870 370 862 374Z" fill="url(#mPad)" stroke={L} strokeWidth={0.7} />
    {/* long side, pad side and arch strip */}
    <path d="M673 300C685 295 703 288 715 288C735 288 752 305 761 325C767 340 766 355 768 363C770 375 778 384 792 384C800 384 805 382 808 380L862 350V374L795 413L791 416V468L442 673V617L478 597V611L487 607L673 498L698 478C715 462 732 440 742 412C750 395 754 380 754 367C755 345 748 325 735 314C725 305 715 302 703 303C695 304 689 307 683 310Z" fill="#d88000" stroke={L} strokeWidth={0.7} />
    {/* rib and floor */}
    <path d="M760 397C762 393 765 393 768 393C774 395 780 398 787 400V462L740 447C748 432 755 412 760 397Z" fill="#bb7305" stroke={L} strokeWidth={0.7} />
    <path d="M688 502C705 487 725 468 740 447L787 462L688 519Z" fill="#ffa800" stroke={L} strokeWidth={0.7} />
    {/* arch face */}
    <path d="M628 292C665 265 700 243 740 243C760 241 785 240 800 248C820 258 845 280 860 308L768 363C766 355 767 340 761 325C752 305 735 288 715 288L727 288L717 283C708 276 700 272 693 272C680 271 665 276 645 283Z" fill="#d88000" stroke={L} strokeWidth={0.7} />
    {/* hole in arch */}
    <clipPath id="archHole"><ellipse cx="779" cy="307" rx="23" ry="14.500" transform="rotate(-52 779 307)" /></clipPath>
    <ellipse cx="779" cy="307" rx="23" ry="14.500" transform="rotate(-52 779 307)" fill="#e99200" stroke={L} strokeWidth={0.7} />
    <g clipPath="url(#archHole)"><ellipse cx="774.500" cy="304.500" rx="22" ry="13.500" transform="rotate(-52 774.500 304.500)" fill="#fff" stroke={L} strokeWidth={0.5} /></g>
    {/* strip on top of arch */}
    <path d="M617 287 668 255C690 243 715 237 740 237C755 236 785 238 800 248C785 240 760 241 740 243C700 243 665 265 628 292Z" fill="#ffa800" stroke={L} strokeWidth={0.7} />
    {/* tab top */}
    <path d="M587 277C588 268 595 262 603 258C612 252 620 249 630 247C640 245 655 244 668 253L617 287L628 292L645 283C665 276 680 271 693 272C700 272 708 276 717 283L727 288H715C703 288 685 295 673 300C670 303 668 304 665 305C655 310 640 310 630 307L595 287C591 284 588 281 587 277Z" fill="url(#mTabTop)" stroke={L} strokeWidth={0.7} />
    <path d="M603 258 630 275M645 283 673 300" stroke={L} strokeWidth={0.7} />
    {/* right pad top */}
    <path d="M860 308 872 318C876 322 877 326 877 330C876 334 870 344 862 350L808 380C802 383 795 385 787 384C779 383 772 374 768 363Z" fill="#ffa800" stroke={L} strokeWidth={0.7} />
    <path d="M782 362 810 378" stroke={L} strokeWidth={0.7} />
    {/* curved inner surface */}
    <path d="M603 457C625 445 645 425 660 400C672 380 682 345 683 310C689 307 695 304 703 303C715 302 725 305 735 314C748 325 755 345 754 367C754 380 750 395 742 412C732 440 715 462 698 478L673 498L642 478Z" fill="url(#mInner)" stroke={L} strokeWidth={0.7} />
    {/* arm top */}
    <path d="M357 595C357 588 360 581 366 577L405 556C418 549 433 546 448 547L603 457L673 498L487 607L478 611V597L442 617C435 621 420 626 403 626C385 626 368 618 360 605C358 602 357 598 357 595Z" fill="#ffa800" stroke={L} strokeWidth={0.7} />
    {/* arm end side */}
    <path d="M357 595V655C358 662 362 667 367 670C375 676 395 681 411 682V638L426 637V680L436 676L442 673V617C435 621 420 626 403 626C385 626 368 618 360 605C358 602 357 598 357 595Z" fill="url(#mEnd)" stroke={L} strokeWidth={0.7} />
    <path d="M411 638 426 637V680L411 676Z" fill="#c27a08" />
    <path d="M411 638V682M426 637V680" stroke="#7a5030" strokeWidth={0.8} />
    {/* ring boss */}
    <path d="M493 577C493 585 487 592 478 597V611L487 607C491 603 493 598 493 593Z" fill="#c67a02" stroke={L} strokeWidth={0.7} />
    <path d="M448 547C472 548 493 560 493 577C493 585 487 592 478 597L442 617L420 590Z" fill="#ffa800" />
    <path d="M448 547C472 548 493 560 493 577C493 585 487 592 478 597L442 617" stroke={L} strokeWidth={0.7} />
    <ellipse cx="442" cy="576" rx="31" ry="18.500" fill="url(#mHole)" stroke={L} strokeWidth={0.7} />
  </svg>
);

const RightBar = () => (
  <div className="w-[35px] shrink-0 h-full flex flex-col items-center pt-[22px] pr-[2px] bg-white">
    <div className="flex flex-col gap-[2px] mb-[20px]"><div className="w-[12px] h-px bg-[#1c1c80]" /><div className="w-[12px] h-px bg-[#1c1c80]" /></div>
    <Ico w={24} h={24} className="mb-[6px]">
      <path d="M8 0l8 5 4 1-3 3H8z" fill="#e6c8a8" stroke="#555" strokeWidth={0.6} /><path d="M14 2l5 2 1-2-4-1.500z" fill="#2c2ca8" />
      <path d="M15 5l3 6 6 1-4 4 1 6-6-3-6 3 1-6-4-4 6-1z" fill="#ffe660" stroke="#c8a030" strokeWidth={0.6} />
      <path d="M0 11h7M1 15h7M1 19h7" stroke="#7ab8d8" strokeWidth={1.500} />
    </Ico>
    <Ico w={25} h={25} className="mb-[8px]">
      <path d="M1 23V9C7 3 14 1 22 1M1 23h16" stroke="#19b0d4" /><circle cx="11" cy="14" r="7" stroke="#19b0d4" />
      <Wrench x={6} y={5} s={0.8} />
    </Ico>
    <Ico w={25} h={25} className="mb-[6px]">
      <path d="M1 11l10-5 10 5-9 6z" fill="#ddd" stroke="#444" /><path d="M1 11v4l11 6v-4z" fill="#bbb" stroke="#444" />
      <rect x="6" y="0.500" width="11" height="11" rx="4" fill="url(#gOrange)" stroke="#b85e10" />
      <Wrench x={7} y={7} s={0.75} />
    </Ico>
    <Ico w={24} h={24} className="mb-[9px]"><path d="M.5 24 24 .5" stroke="#19a4c8" /></Ico>
    <Ico w={21} h={21} className="mb-[10px]"><path d="M10.500 0v21M0 10.500h21" stroke="#2ca4c4" /></Ico>
    <div className="mb-[6px]"><Part s={25} /></div>
    <Ico w={22} h={23} className="mb-[9px]">
      <path d="M1 8l10-7 10 5v11l-10 5-10-5z" fill="#ddd" stroke="#444" />
      <path d="M1 17v-6c0-3 5-4 9-8l5 4c-4 1-6 4-6 7v6z" fill="url(#gOrange)" />
    </Ico>
    <Ico w={24} h={23} className="mb-[9px]">
      <path d="M1 7 12 1l11 6v11l-7 4V12l-4-2-4 2v10l-7-4z" fill="url(#gGray)" stroke="#444" />
      <path d="M1 7 12 1l11 6M8 12l4-2 4 2" stroke="#19b6d8" strokeWidth={1.400} />
    </Ico>
    <Ico w={22} h={23} className="mb-[12px]">
      <path d="M1 7l10-6 10 6v10l-10 5-10-5z" fill="#ddd" stroke="#444" />
      <path d="M5 8 11 5l6 3v9l-6 3-6-3z" fill="#e0b27a" />
      <ellipse cx="11" cy="7" rx="5" ry="3" fill="#ef7d18" />
    </Ico>
    <div className="w-[26px] h-[2px] bg-[#dcdcdc]" />
  </div>
);

export default function App() {
  return (
    <div className={`relative w-[960px] h-[701px] overflow-hidden flex flex-col bg-linear-to-r from-[#04688b] to-[#0579a6] ${font}`}>
      <Defs />
      <TitleBar />
      <MenuTabs />
      <div className="relative mx-[4px] flex-1 min-h-0 flex flex-col bg-white overflow-hidden">
        <Ribbon />
        <Toolbar />
        <div className="flex-1 min-h-0 flex border-t border-[#e2e2e2]">
          <Rail />
          <Tree />
          <div className="flex-1 min-w-0 flex flex-col">
            <Tabs />
            <div className="flex-1 min-h-0 relative overflow-hidden bg-white border-r border-[#d0d0d0]"><Model /></div>
          </div>
          <RightBar />
        </div>
        <div className="absolute left-[788px] bottom-[3px] whitespace-nowrap text-[14px] leading-[16px] text-[#7a7a7a] font-['Liberation_Mono','Noto_Sans_CJK_SC',monospace]">UG爱好者论坛@pzhzshun</div>
      </div>
    </div>
  );
}
